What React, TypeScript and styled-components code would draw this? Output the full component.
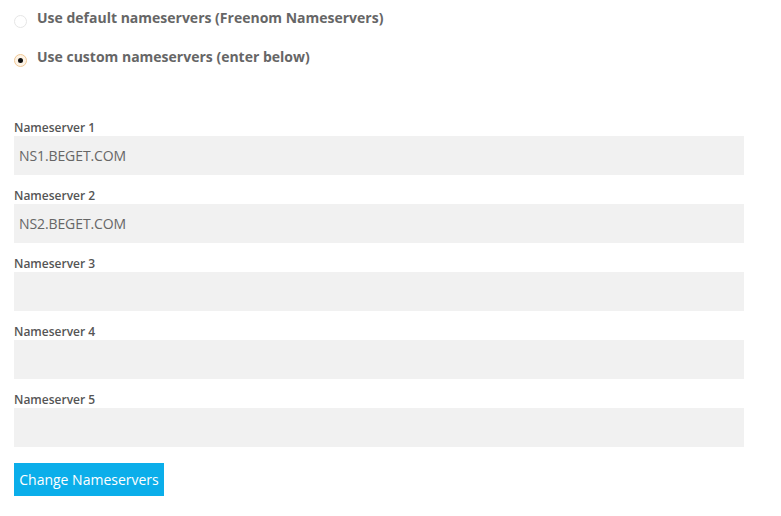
import React from 'react';
import styled, { createGlobalStyle } from 'styled-components';

const GlobalStyle = createGlobalStyle`
  html, body {
    margin: 0;
    padding: 0;
    background: #ffffff;
  }
  body {
    font-family: "Open Sans", "Liberation Sans", sans-serif;
  }
`;

const Page = styled.div`
  width: 781px;
  height: 516px;
  box-sizing: border-box;
  padding: 6px 37px 0 14px;
`;

const RadioGroup = styled.div`
  display: flex;
  flex-direction: column;
  gap: 17px;
  margin-bottom: 53px;
`;

const RadioRow = styled.label`
  display: flex;
  align-items: center;
  gap: 10px;
  height: 22px;
  font-size: 14px;
  font-weight: 700;
  color: #666666;
`;

const RadioDot = styled.span<{ $checked?: boolean }>`
  width: 13px;
  height: 13px;
  box-sizing: border-box;
  border-radius: 50%;
  margin-top: 9px;
  flex: none;
  position: relative;
  border: 1px solid ${(p) => (p.$checked ? '#f0c896' : '#e6e6e6')};
  background: ${(p) => (p.$checked ? '#fdf3e6' : '#ffffff')};

  &::after {
    content: '';
    display: ${(p) => (p.$checked ? 'block' : 'none')};
    position: absolute;
    left: 3px;
    top: 3px;
    width: 5px;
    height: 5px;
    border-radius: 50%;
    background: #111111;
  }
`;

const Fields = styled.div`
  display: flex;
  flex-direction: column;
`;

const Field = styled.div`
  display: flex;
  flex-direction: column;
  height: 68px;
`;

const Label = styled.div`
  font-size: 12px;
  font-weight: 600;
  color: #555555;
  line-height: 16px;
`;

const Input = styled.div`
  height: 39px;
  background: #f1f1f1;
  display: flex;
  align-items: center;
  padding-left: 5px;
  font-size: 14px;
  color: #666666;
  letter-spacing: -0.1px;
`;

const Button = styled.button`
  margin-top: 3px;
  width: 150px;
  height: 33px;
  border: none;
  background: #0baeea;
  color: #ffffff;
  font-family: "Open Sans", "Liberation Sans", sans-serif;
  font-size: 14px;
  padding: 0;
`;

const servers = ['NS1.BEGET.COM', 'NS2.BEGET.COM', '', '', ''];

export default function App() {
  return (
    <Page>
      <GlobalStyle />
      <RadioGroup>
        <RadioRow>
          <RadioDot />
          Use default nameservers (Freenom Nameservers)
        </RadioRow>
        <RadioRow>
          <RadioDot $checked />
          Use custom nameservers (enter below)
        </RadioRow>
      </RadioGroup>
      <Fields>
        {servers.map((s, i) => (
          <Field key={i}>
            <Label>Nameserver {i + 1}</Label>
            <Input>{s}</Input>
          </Field>
        ))}
      </Fields>
      <Button>Change Nameservers</Button>
    </Page>
  );
}
